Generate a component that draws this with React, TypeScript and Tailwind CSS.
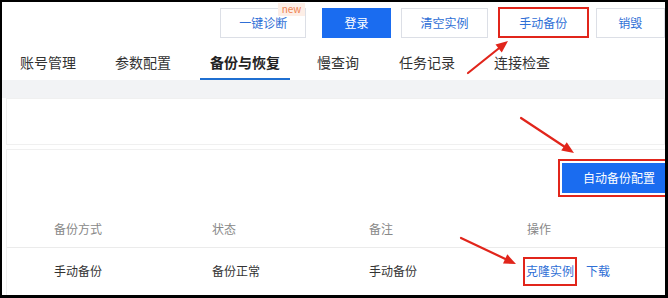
import React from "react";

const font = { fontFamily: '"Noto Sans CJK SC", "Noto Sans", sans-serif' };

function Arrow({ x1, y1, x2, y2 }: { x1: number; y1: number; x2: number; y2: number }) {
  const dx = x2 - x1;
  const dy = y2 - y1;
  const len = Math.sqrt(dx * dx + dy * dy);
  const ux = dx / len;
  const uy = dy / len;
  const hl = 12;
  const hw = 5;
  const bx = x2 - ux * hl;
  const by = y2 - uy * hl;
  const px = -uy;
  const py = ux;
  const pts = `${x2},${y2} ${bx + px * hw},${by + py * hw} ${bx - px * hw},${by - py * hw}`;
  return (
    <g>
      <line x1={x1} y1={y1} x2={bx + ux * 2} y2={by + uy * 2} stroke="#e1251b" strokeWidth={2.2} strokeLinecap="round" />
      <polygon points={pts} fill="#e1251b" />
    </g>
  );
}

export default function App() {
  return (
    <div className="w-[668px] h-[298px] bg-black pl-[2px] pt-[2px] pr-[3px] pb-[3px]" style={font}>
      <div className="relative w-full h-full bg-white overflow-hidden">
        {/* top buttons */}
        <div className="h-[42px] flex items-start pt-[6px] pl-[218px] text-[12px]">
          <div className="relative w-[87px] h-[30px] border border-[#dcdfe6] flex items-center justify-center text-[#2f6fd6]">
            一键诊断
            <span className="absolute -top-[6px] right-0 px-[4px] h-[13px] leading-[12px] text-[10px] bg-[#fdeee6] text-[#ee8150]">new</span>
          </div>
          <div className="ml-[16px] w-[69px] h-[30px] bg-[#1a6cf0] flex items-center justify-center text-white">登录</div>
          <div className="ml-[10px] w-[88px] h-[30px] border border-[#dcdfe6] flex items-center justify-center text-[#2f6fd6]">清空实例</div>
          <div className="ml-[10px] w-[91px] h-[31px] -mt-[1px] border-2 border-[#e1251b] flex items-center justify-center text-[#2f6fd6]">手动备份</div>
          <div className="ml-[7px] w-[70px] h-[30px] border border-[#dcdfe6] flex items-center justify-center text-[#2f6fd6]">销毁</div>
        </div>

        {/* tabs */}
        <div className="h-[36px] flex items-stretch pl-[8px] text-[14px] text-[#333]">
          <div className="px-[10px] mr-[19px] flex items-center pt-[2px] border-b-2 border-transparent">账号管理</div>
          <div className="px-[10px] mr-[19px] flex items-center pt-[2px] border-b-2 border-transparent">参数配置</div>
          <div className="px-[10px] mr-[17px] flex items-center pt-[2px] border-b-2 border-[#1f6fd1] font-bold text-[#222]">备份与恢复</div>
          <div className="px-[10px] mr-[20px] flex items-center pt-[2px] border-b-2 border-transparent">慢查询</div>
          <div className="px-[10px] mr-[19px] flex items-center pt-[2px] border-b-2 border-transparent">任务记录</div>
          <div className="px-[10px] flex items-center pt-[2px] border-b-2 border-transparent">连接检查</div>
        </div>

        {/* gray band */}
        <div className="h-[18px] bg-[#f2f3f5]" />

        {/* card 1 */}
        <div className="ml-[4px] h-[47px] border border-[#f0f0f0]" />

        {/* card 2 */}
        <div className="ml-[4px] mt-[4px] border-l border-t border-[#f0f0f0] h-[200px]">
          <div className="flex justify-start pl-[551px] pt-[9px]">
            <div className="border-2 border-[#e1251b] p-[2px] shrink-0">
              <div className="w-[114px] h-[30px] bg-[#1a6cf0] flex items-center justify-center text-white text-[12px]">自动备份配置</div>
            </div>
          </div>

          <div className="mt-[13px] text-[12px]">
            <div className="grid grid-cols-[158px_157px_158px_1fr] pl-[47px] h-[38px] items-center border-b border-[#ebebeb] text-[#888]">
              <div>备份方式</div>
              <div>状态</div>
              <div>备注</div>
              <div>操作</div>
            </div>
            <div className="grid grid-cols-[158px_157px_158px_1fr] pl-[47px] h-[46px] items-center text-[#333]">
              <div>手动备份</div>
              <div>备份正常</div>
              <div>手动备份</div>
              <div className="flex items-center">
                <span className="-ml-[4px] border-2 border-[#e1251b] px-[1px] h-[29px] flex items-center text-[#2f6fd6]">克隆实例</span>
                <span className="ml-[9px] text-[#2f6fd6]">下载</span>
              </div>
            </div>
          </div>
        </div>

        {/* annotation arrows */}
        <svg className="absolute left-0 top-0 pointer-events-none" width="663" height="293" viewBox="2 2 663 293">
          <Arrow x1={468} y1={73} x2={508} y2={41} />
          <Arrow x1={521} y1={118} x2={574} y2={153} />
          <Arrow x1={461} y1={238} x2={516} y2={264} />
        </svg>
      </div>
    </div>
  );
}
